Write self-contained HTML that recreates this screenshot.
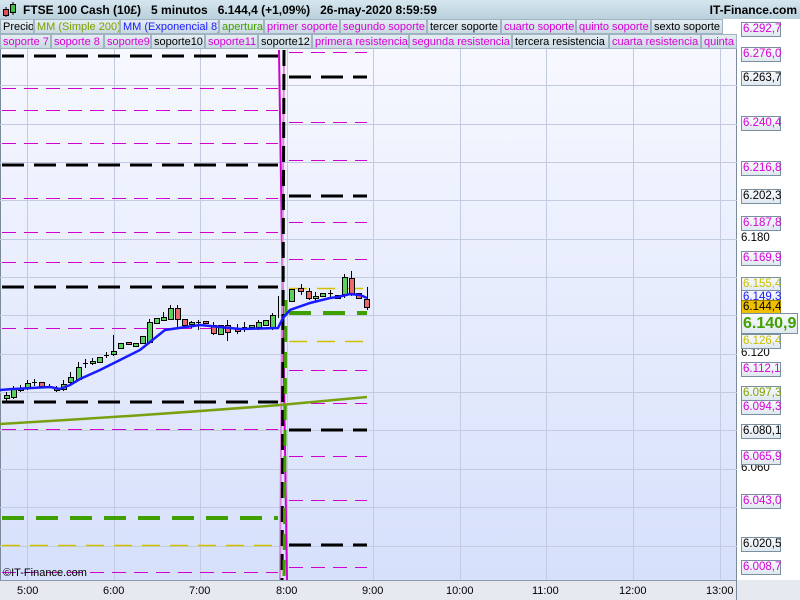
<!DOCTYPE html>
<html><head><meta charset="utf-8"><style>
*{margin:0;padding:0;box-sizing:border-box}
body{width:800px;height:600px;overflow:hidden;font-family:"Liberation Sans",sans-serif;background:#fff;position:relative}
.hdr{position:absolute;left:0;top:0;width:800px;height:19px;background:linear-gradient(#d6e6ee,#b9d0dc);font-size:12px;font-weight:bold;color:#000;white-space:nowrap}
.lg{position:absolute;height:15px;font-size:11px;line-height:14px;padding:0 2px;background:linear-gradient(#e4edf2,#c9d9e2);border:1px solid #9fb4c0;white-space:nowrap;overflow:hidden}
.m{color:#d800d8}.k{color:#000}
.ax{position:absolute;left:741px;width:40px;height:15px;font-size:11.5px;line-height:13px;padding-left:1px;border:1px solid #7a8fa0;background:linear-gradient(#f8fbfd,#dfe8f0);white-space:nowrap;overflow:visible}
.pl{position:absolute;left:741px;font-size:11.5px;line-height:13px}
.xl{position:absolute;top:585px;font-size:11px}
</style></head><body>
<div class="hdr">
<svg style="position:absolute;left:2px;top:1px" width="16" height="16"><line x1="4" y1="6" x2="4" y2="16" stroke="#000"/><rect x="1.5" y="8.5" width="5" height="6" fill="#e05050" stroke="#000"/><line x1="11" y1="1" x2="11" y2="14" stroke="#000"/><rect x="8.5" y="3.5" width="5" height="8" fill="#40c040" stroke="#000"/></svg>
<span style="position:absolute;left:23px;top:3px">FTSE 100 Cash (10£)&nbsp;&nbsp;&nbsp;5 minutos&nbsp;&nbsp;&nbsp;6.144,4 (+1,09%)&nbsp;&nbsp;&nbsp;26-may-2020 8:59:59</span>
<span style="position:absolute;right:3px;top:3px;font-weight:bold">IT-Finance.com</span>
</div>
<div class="lg k" style="left:0;top:19px;width:34px">Precio</div>
<div class="lg" style="left:34px;top:19px;width:86px;color:#80a000">MM (Simple 200)</div>
<div class="lg" style="left:120px;top:19px;width:99px;color:#1a1aff">MM (Exponencial 8)</div>
<div class="lg" style="left:219px;top:19px;width:45px;color:#40a000">apertura</div>
<div class="lg m" style="left:264px;top:19px;width:76px">primer soporte</div>
<div class="lg m" style="left:340px;top:19px;width:87px">segundo soporte</div>
<div class="lg k" style="left:427px;top:19px;width:74px">tercer soporte</div>
<div class="lg m" style="left:501px;top:19px;width:75px">cuarto soporte</div>
<div class="lg m" style="left:576px;top:19px;width:75px">quinto soporte</div>
<div class="lg k" style="left:651px;top:19px;width:72px">sexto soporte</div>
<div class="lg m" style="left:0;top:34px;width:51px">soporte 7</div>
<div class="lg m" style="left:51px;top:34px;width:53px">soporte 8</div>
<div class="lg m" style="left:104px;top:34px;width:47px">soporte9</div>
<div class="lg k" style="left:151px;top:34px;width:54px">soporte10</div>
<div class="lg m" style="left:205px;top:34px;width:53px">soporte11</div>
<div class="lg k" style="left:258px;top:34px;width:54px">soporte12</div>
<div class="lg m" style="left:312px;top:34px;width:97px">primera resistencia</div>
<div class="lg m" style="left:409px;top:34px;width:103px">segunda resistencia</div>
<div class="lg k" style="left:512px;top:34px;width:97px">tercera resistencia</div>
<div class="lg m" style="left:609px;top:34px;width:92px">cuarta resistencia</div>
<div class="lg m" style="left:701px;top:34px;width:36px">quinta r</div>

<svg style="position:absolute;left:0;top:0" width="800" height="600">
<defs><linearGradient id="bg" x1="0" y1="0" x2="0" y2="1"><stop offset="0" stop-color="#f7f8ff"/><stop offset="1" stop-color="#d6e0fb"/></linearGradient></defs>
<rect x="0" y="49" width="737" height="531" fill="url(#bg)"/>
<rect x="0" y="580" width="800" height="20" fill="#e6e9ef"/>
<line x1="0" y1="580.5" x2="737" y2="580.5" stroke="#8a9aa8"/>
<line x1="736.5" y1="49" x2="736.5" y2="600" stroke="#7a8a98"/>
<line x1="0.5" y1="49" x2="0.5" y2="580" stroke="#7a8a98"/>
<g stroke="#c2cbe0" stroke-width="1">
<line x1="27.5" y1="49" x2="27.5" y2="580"/><line x1="114.5" y1="49" x2="114.5" y2="580"/><line x1="200.5" y1="49" x2="200.5" y2="580"/><line x1="287.5" y1="49" x2="287.5" y2="580"/><line x1="373.5" y1="49" x2="373.5" y2="580"/><line x1="460.5" y1="49" x2="460.5" y2="580"/><line x1="546.5" y1="49" x2="546.5" y2="580"/><line x1="633.5" y1="49" x2="633.5" y2="580"/><line x1="720.5" y1="49" x2="720.5" y2="580"/>
<line x1="0" y1="85.5" x2="737" y2="85.5"/><line x1="0" y1="124.5" x2="737" y2="124.5"/><line x1="0" y1="162.5" x2="737" y2="162.5"/><line x1="0" y1="200.5" x2="737" y2="200.5"/><line x1="0" y1="239.5" x2="737" y2="239.5"/><line x1="0" y1="277.5" x2="737" y2="277.5"/><line x1="0" y1="315.5" x2="737" y2="315.5"/><line x1="0" y1="354.5" x2="737" y2="354.5"/><line x1="0" y1="392.5" x2="737" y2="392.5"/><line x1="0" y1="430.5" x2="737" y2="430.5"/><line x1="0" y1="469.5" x2="737" y2="469.5"/><line x1="0" y1="507.5" x2="737" y2="507.5"/><line x1="0" y1="546.5" x2="737" y2="546.5"/>
</g>
<g stroke="#d000d0" stroke-width="1" stroke-dasharray="14,8">
<line x1="2" y1="88.5" x2="278" y2="88.5"/><line x1="2" y1="110.5" x2="278" y2="110.5"/><line x1="2" y1="143.5" x2="278" y2="143.5"/><line x1="2" y1="198.5" x2="278" y2="198.5"/><line x1="2" y1="232.5" x2="278" y2="232.5"/><line x1="2" y1="262.5" x2="278" y2="262.5"/><line x1="2" y1="328.5" x2="278" y2="328.5"/><line x1="2" y1="429.5" x2="278" y2="429.5"/><line x1="2" y1="572.5" x2="278" y2="572.5"/>
<line x1="289" y1="52.5" x2="367" y2="52.5"/><line x1="289" y1="122.5" x2="367" y2="122.5"/><line x1="289" y1="160.5" x2="367" y2="160.5"/><line x1="289" y1="222.5" x2="367" y2="222.5"/><line x1="289" y1="259.5" x2="367" y2="259.5"/><line x1="289" y1="370.5" x2="367" y2="370.5"/><line x1="289" y1="403.5" x2="367" y2="403.5"/><line x1="289" y1="456.5" x2="367" y2="456.5"/><line x1="289" y1="500.5" x2="367" y2="500.5"/><line x1="289" y1="567.5" x2="367" y2="567.5"/>
</g>
<g stroke="#000" stroke-width="3" stroke-dasharray="22,10">
<line x1="2" y1="56" x2="278" y2="56"/><line x1="2" y1="165" x2="278" y2="165"/><line x1="2" y1="287" x2="278" y2="287"/><line x1="2" y1="402" x2="278" y2="402"/>
<line x1="289" y1="77" x2="367" y2="77"/><line x1="289" y1="196" x2="367" y2="196"/><line x1="289" y1="430" x2="367" y2="430"/><line x1="289" y1="545" x2="367" y2="545"/>
</g>
<g stroke="#d0c000" stroke-width="1.5" stroke-dasharray="18,10">
<line x1="2" y1="545.5" x2="278" y2="545.5"/><line x1="289" y1="288.5" x2="367" y2="288.5"/><line x1="289" y1="341.5" x2="367" y2="341.5"/>
</g>
<g stroke="#40a000" stroke-width="4" stroke-dasharray="22,12">
<line x1="2" y1="518" x2="278" y2="518"/><line x1="289" y1="313" x2="367" y2="313"/>
</g>
<g stroke-width="3" fill="none">
<path d="M279 50 L287 580" stroke="#d000d0" stroke-width="2"/>
<path d="M284 50 L280 580" stroke="#e080e0" stroke-width="2"/>
<path d="M284 50 L282 580" stroke="#000" stroke-dasharray="16,8"/>
<path d="M286 300 L284 580" stroke="#40a000" stroke-dasharray="16,10"/>
</g>
<path d="M0 424 Q140 416 280 405 L367 397" stroke="#78a010" stroke-width="2.5" fill="none"/>
<g stroke="#000" stroke-width="1">
<line x1="6.5" y1="392" x2="6.5" y2="401"/><line x1="13.5" y1="386" x2="13.5" y2="399"/><line x1="20.5" y1="385" x2="20.5" y2="392"/><line x1="27.5" y1="380" x2="27.5" y2="390"/><line x1="34.5" y1="379" x2="34.5" y2="386"/><line x1="49.5" y1="384" x2="49.5" y2="388"/><line x1="56.5" y1="386" x2="56.5" y2="392"/><line x1="63.5" y1="380" x2="63.5" y2="391"/><line x1="70.5" y1="372" x2="70.5" y2="385"/><line x1="78.5" y1="362" x2="78.5" y2="381"/><line x1="85.5" y1="359" x2="85.5" y2="368"/><line x1="92.5" y1="358" x2="92.5" y2="365"/><line x1="106.5" y1="352" x2="106.5" y2="358"/><line x1="113.5" y1="335" x2="113.5" y2="356"/><line x1="149.5" y1="319" x2="149.5" y2="344"/><line x1="163.5" y1="312" x2="163.5" y2="321"/><line x1="170.5" y1="305" x2="170.5" y2="320"/><line x1="177.5" y1="305" x2="177.5" y2="327"/><line x1="191.5" y1="321" x2="191.5" y2="328"/><line x1="198.5" y1="320" x2="198.5" y2="330"/><line x1="213.5" y1="322" x2="213.5" y2="335"/><line x1="227.5" y1="320" x2="227.5" y2="341"/><line x1="237.5" y1="324" x2="237.5" y2="334"/><line x1="244.5" y1="322" x2="244.5" y2="332"/><line x1="258.5" y1="320" x2="258.5" y2="330"/><line x1="272.5" y1="313" x2="272.5" y2="330"/><line x1="278.5" y1="296" x2="278.5" y2="318"/>
<line x1="301.5" y1="284" x2="301.5" y2="295"/><line x1="309.5" y1="288" x2="309.5" y2="300"/><line x1="315.5" y1="292" x2="315.5" y2="302"/><line x1="330.5" y1="290" x2="330.5" y2="298"/><line x1="344.5" y1="274" x2="344.5" y2="298"/><line x1="351.5" y1="271" x2="351.5" y2="296"/><line x1="367.5" y1="287" x2="367.5" y2="310"/>
<rect x="4.5" y="395.5" width="5" height="3" fill="#5cd05c"/><rect x="11.5" y="389.5" width="5" height="8" fill="#5cd05c"/><rect x="18.5" y="388.5" width="5" height="2" fill="#5cd05c"/><rect x="25.5" y="383.5" width="5" height="5" fill="#5cd05c"/><line x1="32" y1="382.5" x2="37" y2="382.5"/><rect x="39.5" y="382.5" width="5" height="4" fill="#e86a6a"/><line x1="47" y1="386.5" x2="52" y2="386.5"/><rect x="54.5" y="388.5" width="5" height="2" fill="#5cd05c"/><rect x="61.5" y="384.5" width="5" height="5" fill="#5cd05c"/><rect x="68.5" y="377.5" width="5" height="5" fill="#5cd05c"/><rect x="76.5" y="367.5" width="5" height="12" fill="#5cd05c"/><line x1="83" y1="363.5" x2="88" y2="363.5"/><rect x="90.5" y="361.5" width="5" height="2" fill="#5cd05c"/><rect x="97.5" y="357.5" width="5" height="5" fill="#5cd05c"/><line x1="104" y1="355.5" x2="109" y2="355.5"/><rect x="111.5" y="351.5" width="5" height="3" fill="#5cd05c"/><rect x="118.5" y="343.5" width="5" height="5" fill="#5cd05c"/><rect x="126.5" y="342.5" width="5" height="2" fill="#e86a6a"/><rect x="133.5" y="343.5" width="5" height="3" fill="#5cd05c"/><rect x="140.5" y="336.5" width="5" height="7" fill="#5cd05c"/><rect x="147.5" y="322.5" width="5" height="20" fill="#5cd05c"/><rect x="154.5" y="318.5" width="5" height="5" fill="#5cd05c"/><rect x="161.5" y="317.5" width="5" height="3" fill="#5cd05c"/><rect x="168.5" y="308.5" width="5" height="11" fill="#5cd05c"/><rect x="175.5" y="308.5" width="5" height="11" fill="#e86a6a"/><rect x="182.5" y="319.5" width="5" height="6" fill="#e86a6a"/><rect x="189.5" y="322.5" width="5" height="2" fill="#5cd05c"/><line x1="196" y1="322.5" x2="201" y2="322.5"/><rect x="203.5" y="321.5" width="5" height="2" fill="#e86a6a"/><rect x="211.5" y="325.5" width="5" height="8" fill="#e86a6a"/><rect x="218.5" y="325.5" width="5" height="9" fill="#5cd05c"/><rect x="225.5" y="325.5" width="5" height="7" fill="#e86a6a"/><rect x="235.5" y="328.5" width="5" height="3" fill="#e86a6a"/><line x1="242" y1="327.5" x2="247" y2="327.5"/><rect x="249.5" y="325.5" width="5" height="2" fill="#5cd05c"/><rect x="256.5" y="322.5" width="5" height="5" fill="#5cd05c"/><rect x="263.5" y="320.5" width="5" height="5" fill="#5cd05c"/><rect x="270.5" y="315.5" width="5" height="12" fill="#5cd05c"/>
<rect x="289.5" y="289.5" width="5" height="12" fill="#5cd05c"/><rect x="298.5" y="288.5" width="5" height="3" fill="#e86a6a"/><rect x="306.5" y="291.5" width="5" height="7" fill="#e86a6a"/><rect x="313.5" y="296.5" width="5" height="2" fill="#5cd05c"/><rect x="320.5" y="293.5" width="5" height="3" fill="#5cd05c"/><line x1="328" y1="293.5" x2="333" y2="293.5"/><rect x="335.5" y="295.5" width="5" height="3" fill="#e86a6a"/><rect x="342.5" y="277.5" width="5" height="17" fill="#5cd05c"/><rect x="349.5" y="278.5" width="5" height="15" fill="#e86a6a"/><rect x="356.5" y="293.5" width="5" height="5" fill="#e86a6a"/><rect x="364.5" y="299.5" width="5" height="8" fill="#e86a6a"/>
</g>
<path d="M0 390 L13 389 L50 387 L60 389 L70 385 L80 379 L100 370 L120 360 L140 350 L165 330 L200 325 L240 329 L278 328 L283 318 L290 310 L310 303 L330 298 L338 297 L350 294 L360 295 L367 298" stroke="#1a1aff" stroke-width="2.5" fill="none"/>
</svg>

<div style="position:absolute;left:3px;top:567px;font-size:11px">©IT-Finance.com</div>
<div class="xl" style="left:17px">5:00</div><div class="xl" style="left:103px">6:00</div><div class="xl" style="left:189px">7:00</div><div class="xl" style="left:276px">8:00</div><div class="xl" style="left:362px">9:00</div><div class="xl" style="left:446px">10:00</div><div class="xl" style="left:532px">11:00</div><div class="xl" style="left:619px">12:00</div><div class="xl" style="left:706px">13:00</div>

<div class="pl" style="top:232px">6.180</div>
<div class="pl" style="top:347px">6.120</div>
<div class="pl" style="top:462px">6.060</div>
<div class="ax m" style="top:22px">6.292,7</div>
<div class="ax m" style="top:47px">6.276,0</div>
<div class="ax k" style="top:71px">6.263,7</div>
<div class="ax m" style="top:116px">6.240,4</div>
<div class="ax m" style="top:161px">6.216,8</div>
<div class="ax k" style="top:189px">6.202,3</div>
<div class="ax m" style="top:216px">6.187,8</div>
<div class="ax m" style="top:251px">6.169,9</div>
<div class="ax" style="top:277px;color:#c8c000">6.155,4</div>
<div class="ax" style="top:290px;color:#1a1aff">6.149,3</div>
<div class="ax k" style="top:300px;background:#f0c000;border-color:#a08000">6.144,4</div>
<div class="ax" style="top:313px;height:21px;width:57px;font-size:16px;line-height:19px;font-weight:bold;color:#40a000">6.140,9</div>
<div class="ax" style="top:334px;color:#c8c000">6.126,4</div>
<div class="ax m" style="top:362px">6.112,1</div>
<div class="ax" style="top:386px;color:#80a000">6.097,3</div>
<div class="ax m" style="top:400px">6.094,3</div>
<div class="ax k" style="top:424px">6.080,1</div>
<div class="ax m" style="top:450px">6.065,9</div>
<div class="ax m" style="top:494px">6.043,0</div>
<div class="ax k" style="top:537px">6.020,5</div>
<div class="ax m" style="top:560px">6.008,7</div>
</body></html>
